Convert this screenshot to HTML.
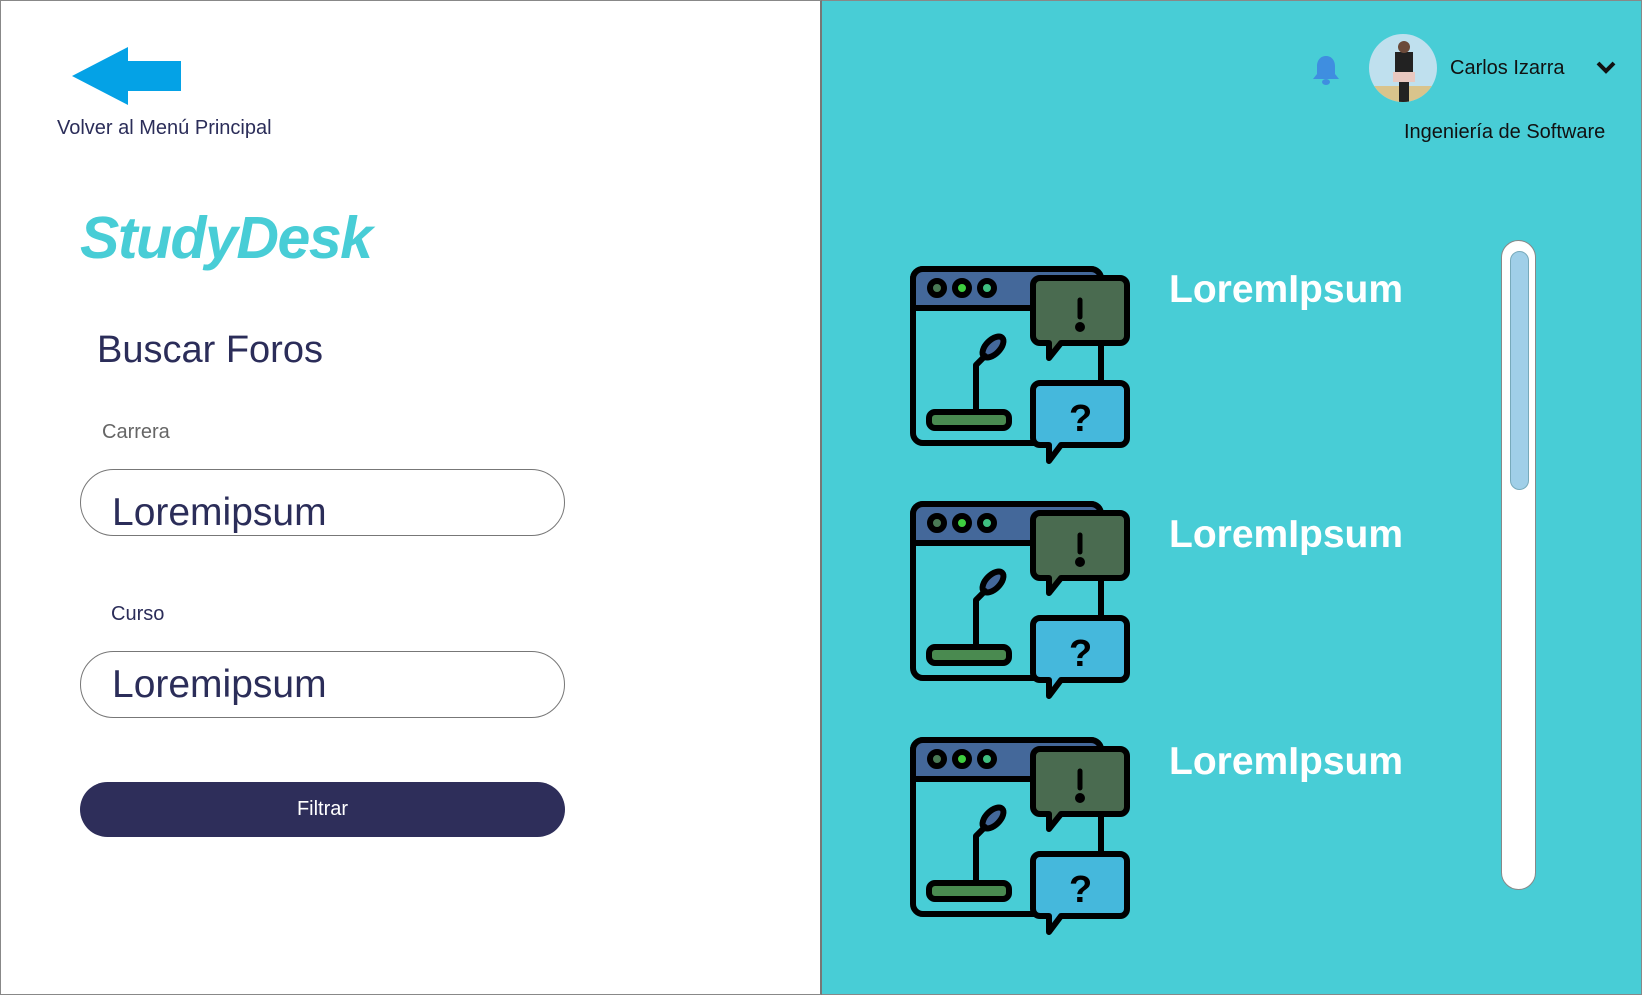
<!DOCTYPE html>
<html><head><meta charset="utf-8"><style>
*{margin:0;padding:0;box-sizing:border-box}
body{width:1642px;height:995px;overflow:hidden;font-family:"Liberation Sans",sans-serif;background:#fff;position:relative}
.abs{position:absolute;white-space:nowrap}
#left{position:absolute;left:0;top:0;width:822px;height:995px;border:1px solid #888;border-right:2px solid #777;background:#fff}
#right{position:absolute;left:822px;top:0;width:820px;height:995px;background:#48cdd6;border-top:1px solid #888;border-right:1px solid #888;border-bottom:1px solid #888}
.inp{position:absolute;left:80px;width:485px;border:1px solid #777;border-radius:34px;background:#fff}
.inp span{position:absolute;left:31px;font-size:39px;color:#2b2d59}
.ttl{position:absolute;left:1169px;font-size:39px;font-weight:bold;color:#fff}
</style></head><body>
<div id="left"></div>
<div id="right"></div>
<svg class="abs" style="left:70px;top:45px" width="114" height="62"><polygon points="2,31 58,2 58,16 111,16 111,46 58,46 58,60" fill="#04a2e6"/></svg>
<div class="abs" style="left:57px;top:117px;font-size:20px;color:#2b2d59">Volver al Menú Principal</div>
<div class="abs" style="left:80px;top:204px;font-size:59px;font-weight:bold;font-style:italic;color:#48cdd6;letter-spacing:-1.5px">StudyDesk</div>
<div class="abs" style="left:97px;top:329px;font-size:38px;color:#2b2d59">Buscar Foros</div>
<div class="abs" style="left:102px;top:421px;font-size:20px;color:#666">Carrera</div>
<div class="inp" style="top:469px;height:67px"><span style="top:21px">Loremipsum</span></div>
<div class="abs" style="left:111px;top:603px;font-size:20px;color:#2b2d59">Curso</div>
<div class="inp" style="top:651px;height:67px"><span style="top:11px">Loremipsum</span></div>
<div class="abs" style="left:80px;top:782px;width:485px;height:55px;border-radius:28px;background:#2e2e5a;color:#fff;font-size:20px;text-align:center;line-height:55px">Filtrar</div>

<svg class="abs" style="left:1311px;top:54px" width="30" height="32"><path d="M15 2c-6 0-9 5-9 10v8l-4 5h26l-4-5v-8c0-5-3-10-9-10z" fill="#3f8ee0"/><ellipse cx="15" cy="28" rx="4" ry="3" fill="#3f8ee0"/></svg>
<svg class="abs" style="left:1369px;top:34px" width="68" height="68"><defs><clipPath id="c"><circle cx="34" cy="34" r="34"/></clipPath></defs><g clip-path="url(#c)"><rect width="68" height="68" fill="#bfe0ee"/><rect y="52" width="68" height="16" fill="#d9c48c"/><rect x="26" y="18" width="18" height="20" fill="#222"/><circle cx="35" cy="13" r="6" fill="#6b4a3a"/><rect x="24" y="38" width="22" height="10" fill="#e8c8c0"/><rect x="30" y="48" width="10" height="20" fill="#222"/></g></svg>
<div class="abs" style="left:1450px;top:57px;font-size:20px;color:#111">Carlos Izarra</div>
<svg class="abs" style="left:1595px;top:60px" width="22" height="16"><polyline points="3,3 11,11 19,3" fill="none" stroke="#111" stroke-width="4"/></svg>
<div class="abs" style="left:1404px;top:121px;font-size:20px;color:#111">Ingeniería de Software</div>

<svg width="0" height="0" style="position:absolute"><defs><g id="ic" stroke="#000" stroke-width="6" stroke-linejoin="round" stroke-linecap="round">
<rect x="4" y="4" width="188" height="174" rx="10" fill="#48cdd6"/>
<path d="M4 43V14a10 10 0 0 1 10-10h168a10 10 0 0 1 10 10v29z" fill="#44689a"/>
<circle cx="28" cy="23" r="7" fill="#4a7a55"/><circle cx="53" cy="23" r="7" fill="#3fcf3f"/><circle cx="78" cy="23" r="7" fill="#3fbf80"/>
<path d="M131 13h80a7 7 0 0 1 7 7v51a7 7 0 0 1-7 7h-59l-12 15v-15h-9a7 7 0 0 1-7-7v-51a7 7 0 0 1 7-7z" fill="#4a6b50"/>
<path d="M131 118h80a7 7 0 0 1 7 7v48a7 7 0 0 1-7 7h-59l-12 16v-16h-9a7 7 0 0 1-7-7v-48a7 7 0 0 1 7-7z" fill="#45b8dc"/>
<ellipse cx="84" cy="82" rx="7" ry="13" transform="rotate(45 84 82)" fill="#44689a"/>
<polyline points="76,91 67,100 67,145" fill="none"/>
<rect x="20" y="147" width="80" height="16" rx="6" fill="#4a8a50"/>
<line x1="171" y1="35" x2="171" y2="52" stroke-width="5"/><circle cx="171" cy="62" r="2"/>
</g></defs></svg>
<svg class="abs" style="left:909px;top:265px" width="222" height="202"><use href="#ic"/><text x="160" y="166" font-size="38" font-weight="bold" font-family="Liberation Sans">?</text></svg>
<svg class="abs" style="left:909px;top:500px" width="222" height="202"><use href="#ic"/><text x="160" y="166" font-size="38" font-weight="bold" font-family="Liberation Sans">?</text></svg>
<svg class="abs" style="left:909px;top:736px" width="222" height="202"><use href="#ic"/><text x="160" y="166" font-size="38" font-weight="bold" font-family="Liberation Sans">?</text></svg>
<div class="ttl" style="top:268px">LoremIpsum</div>
<div class="ttl" style="top:513px">LoremIpsum</div>
<div class="ttl" style="top:740px">LoremIpsum</div>

<div class="abs" style="left:1501px;top:240px;width:35px;height:650px;border-radius:18px;background:#fff;border:1px solid #888"></div>
<div class="abs" style="left:1510px;top:251px;width:19px;height:239px;border-radius:10px;background:#a0cfe8;border:1px solid #7ab"></div>
</body></html>
